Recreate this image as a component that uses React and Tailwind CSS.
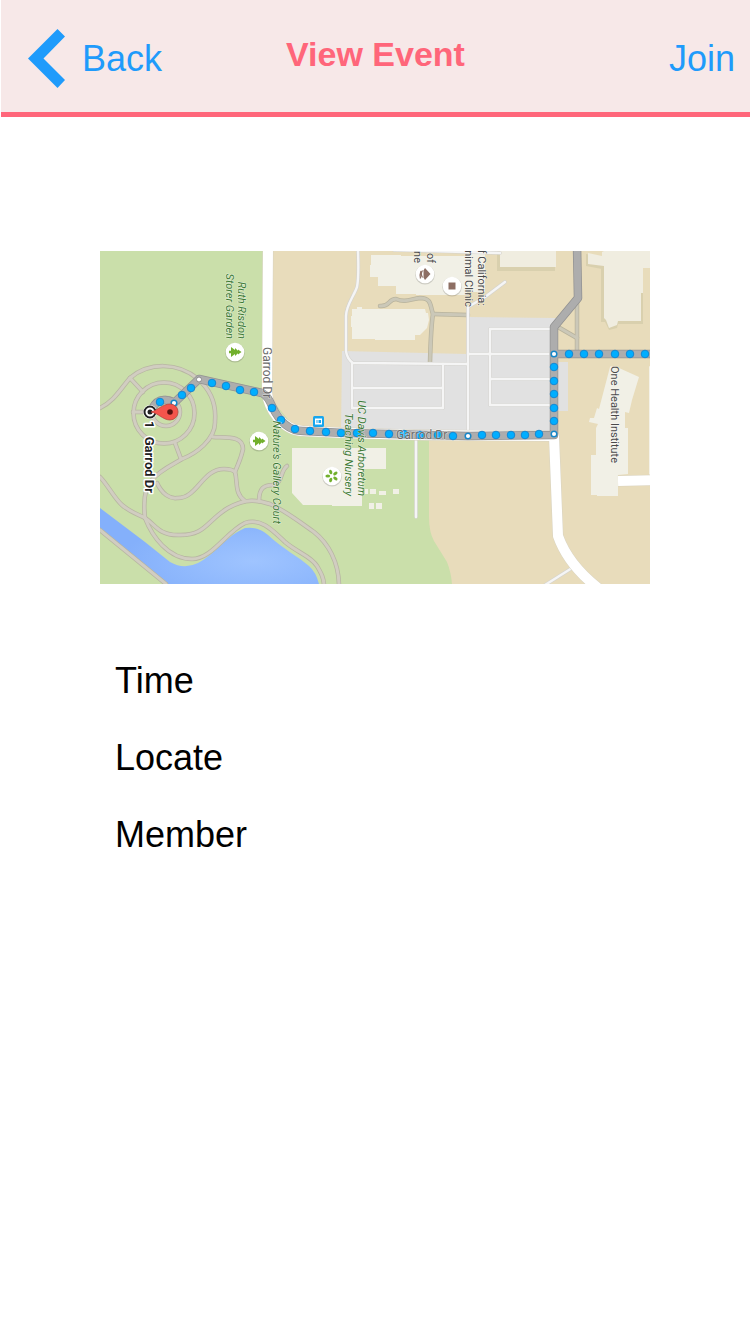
import React from "react";

const PATHS = [
  "M100 530L166 584",
  "M100 477C108 485 114 498 122 505S137 514 145 518C155 524 158 535 178 535C206 536 206 521 228 508C246 498 258 500 270 504C286 511 304 525 314 532C328 543 339 562 339 586",
  "M145 518C152 536 168 559 192 559C212 559 226 532 245 523C262 517 275 533 285 542C298 553 311 556 317 566C321 573 324 578 324 586",
  "M145 518C143 500 145 487 152 480C160 470 174 464 182 459C195 454 216 440 215 421C216 409 214 393 198 379C178 362 149 362 130 378C119 391 114 401 100 408",
  "M130 378L143 392",
  "M133 412H147",
  "M175 443L181 459",
  "M213 437C225 438 243 435 243 449C241 459 238 464 235 472C238 482 234 493 245 501",
  "M157 483C162 494 170 499 177 498C197 499 202 469 224 469Q232 469 235 472",
  "M259 501C259 488 264 485 273 485C283 483 280 471 287 466",
];

const SERVICE_ROADS = [
  "M380 306C390 307 388 299 396 299C405 303 411 299 420 298C432 298 430 306 433 314Q431 326 430 362",
  "M433 314L468 315",
  "M577 297V352",
  "M558 327L577 338",
];

const LANES = [
  "M358 251Q359 277 357 287C354 296 346 305 346 316V351Q347 359 353 363L467 364",
  "M352 363V408H443V364",
  "M352 388H443",
  "M505 282L485 297L468 307V436",
  "M468 354H554",
  "M554 329H490V405H554",
  "M490 379H554",
  "M416 438V517",
  "M572 568L545 585",
  "M394 250L500 253",
];

const MAIN_ROAD =
  "M268 246L267 392C268 408 283 431 303 431L345 433L416 435L554 436L558 536C563 550 575 570 598 588";

const DOTS = [
  [160, 402], [182, 395], [191, 388], [212, 383], [226, 386], [240, 390], [254, 392],
  [272, 408], [281, 420], [295, 429], [310, 431], [326, 432], [341, 433], [357, 433],
  [373, 433], [389, 434], [404, 434], [420, 435], [438, 435], [453, 436], [482, 435],
  [496, 435], [511, 435], [525, 435], [539, 434], [554, 421], [554, 408], [554, 394],
  [554, 381], [554, 367], [569, 354], [584, 354], [599, 354], [615, 354], [630, 354],
  [645, 354],
];

const NODES = [[174, 403], [468, 436], [554, 434], [554, 354]];

function Label({ x, y, children, anchor = "end", size = 11, fill = "#3d7a35", italic, bold, haloWidth = 1, turned = true }) {
  return (
    <text
      transform={turned ? `translate(${x} ${y}) rotate(90)` : `translate(${x} ${y})`}
      textAnchor={anchor}
      fontSize={size}
      fill={fill}
      fontStyle={italic ? "italic" : "normal"}
      fontWeight={bold ? 700 : 400}
      stroke="#fff"
      strokeWidth={haloWidth}
      strokeOpacity={bold ? 1 : 0.6}
      paintOrder="stroke"
      strokeLinejoin="round"
    >
      {children}
    </text>
  );
}

function Place({ x, y, children }) {
  return (
    <g transform={`translate(${x} ${y})`}>
      <circle cy="0.7" r="9.8" fill="#000" opacity="0.15" />
      <circle r="9.3" fill="#fff" />
      {children}
    </g>
  );
}

function Tree() {
  return <path d="M6.500 0L3 -2.500V-1.200L0 -4V-2L-4 -5V-1.200H-6V1.200H-4V5L0 2V4L3 1.200V2.500Z" fill="#72b02d" />;
}

function RouteMap() {
  return (
    <svg viewBox="100 251 550 333" className="block w-full font-[Roboto,sans-serif]" role="img" aria-label="Route to 1 Garrod Dr">
      <defs>
        <radialGradient id="lake" cx="0.7" cy="0.7" r="0.6">
          <stop offset="0" stopColor="#9fc4ff" />
          <stop offset="1" stopColor="#84b0fb" />
        </radialGradient>
      </defs>
      <rect x="100" y="251" width="550" height="333" fill="#e8dcbb" />
      <path d="M100 251H268V395L300 434L429 438V517Q429 532 434 541L447 562Q451 572 452 584H100Z" fill="#cadfaa" />
      <path d="M342 351L467 354V317L556 318V362H568V411H556V434H341Z" fill="#e1e1e1" />
      <path d="M100 508L145 542L170 562Q184 570 198 563C213 556 226 536 245 528Q258 526 268 535C283 549 299 557 309 566Q316 572 319 584H166L100 530Z" fill="url(#lake)" />

      <g fill="#d9d0ae">
        <path d="M497 251H555V271H497Z" />
        <path d="M586 254L602 257V269L586 266ZM601 262H643V324H618L617 328L609 330L605 322H601Z" />
      </g>
      <g fill="#f0ede0">
        <path d="M500 251H556V267H500Z" />
        <path d="M588 253L602 256V252L604 251H650V268H643V293H641V321H618L617 325L609 328L606 320L604 318V266L588 264Z" />
      </g>
      <g fill="#f1f0e6">
        <path d="M371 255H401V256H467V252H485V292H467V295H416V294H396V286H378V277H370V265H371Z" />
        <path d="M352 309H357V307H362V309H425L426 313H428L429 320L427 328L424 331L420 335H415V340H375V339H352V327H351V316H352Z" />
        <path d="M610 367L611 366L619 370V368L639 377L632 400L629 413L625 412V428H628V474L618 475V496H597V495H591V455H596V428L598 424L589 422L590 418H594L597 408L599 409Z" />
        <path d="M292 448H386V469H362V506H332V505H303L292 493Z" />
        <path d="M365 489H368V494H365ZM370 489H376V494H370ZM379 491H386V495H379ZM393 489H399V494H393ZM369 503H374V509H369ZM376 503H382V509H376Z" />
      </g>

      <g fill="none" strokeLinecap="round" strokeLinejoin="round">
        {[["#b7b5a2", 4.5], ["#d1cdc1", 3]].map(([stroke, width]) => (
          <g key={stroke} stroke={stroke} strokeWidth={width}>
            {PATHS.map((d) => <path key={d} d={d} />)}
            <circle cx="164" cy="413" r="30.500" />
            <circle cx="166" cy="412" r="14" />
          </g>
        ))}
        {[["#b8b39d", 4.5], ["#cbc8b8", 3]].map(([stroke, width]) => (
          <g key={stroke} stroke={stroke} strokeWidth={width}>
            {SERVICE_ROADS.map((d) => <path key={d} d={d} />)}
          </g>
        ))}
        {[["#d4d3cf", 3.6], ["#f5f5f5", 2.4]].map(([stroke, width]) => (
          <g key={stroke} stroke={stroke} strokeWidth={width}>
            {LANES.map((d) => <path key={d} d={d} />)}
          </g>
        ))}
        <path d="M650 367V474" stroke="#f4f2e9" strokeWidth="2" />
        <path d="M618 481L655 480" stroke="#d9d2bd" strokeWidth="11" strokeLinecap="butt" />
        <path d="M618 481L655 480" stroke="#fff" strokeWidth="10" strokeLinecap="butt" />
        <path d={MAIN_ROAD} stroke="#d8d3c2" strokeWidth="11" />
        <path d={MAIN_ROAD} stroke="#fff" strokeWidth="10" />
        {[["#929292", 8.5], ["#adadad", 7]].map(([stroke, width]) => (
          <g key={stroke} stroke={stroke} strokeWidth={width}>
            <path d="M577 246L578 298L554 327V354" />
            <path d="M152 409Q157 399 165 400T174 403L199 379L262 393Q268 396 272 406C278 419 288 431 303 431L345 433L390 434L468 436L554 435V354H655" />
          </g>
        ))}
      </g>

      <g fill="#00aeff" stroke="#1687d1" strokeWidth="1">
        {DOTS.map(([x, y]) => <circle key={`${x}-${y}`} cx={x} cy={y} r="3.8" />)}
      </g>
      <g fill="#fff" stroke="#1787c9" strokeWidth="1.500">
        {NODES.map(([x, y]) => <circle key={`${x}-${y}`} cx={x} cy={y} r="2.800" />)}
      </g>
      <circle cx="199" cy="379.500" r="2.500" fill="#fff" stroke="#8b8b8b" />

      <Label x={238} y={339} italic>Ruth Risdon</Label>
      <Label x={226} y={339} italic>Storer Garden</Label>
      <Label x={273} y={524} italic>Nature's Gallery Court</Label>
      <Label x={358} y={496} italic>UC Davis Arboretum</Label>
      <Label x={345} y={496} italic>Teaching Nursery</Label>
      <Label x={263} y={347} anchor="start" size={12} fill="#6b6b6b">Garrod Dr</Label>
      <Label x={396} y={439} anchor="start" size={12} fill="#6b6b6b" turned={false}>Garrod Dr</Label>
      <Label x={611} y={366} anchor="start" fill="#4a4a4a">One Health Institute</Label>
      <Label x={478} y={306} fill="#4a4a4a">f California:</Label>
      <Label x={465} y={307} fill="#4a4a4a">nimal Clinic</Label>
      <Label x={427} y={263} fill="#4a4a4a">of</Label>
      <Label x={414} y={263} fill="#4a4a4a">ne</Label>
      <Label x={145} y={421} anchor="start" bold size={13} fill="#222" haloWidth={3}>1</Label>
      <Label x={145} y={493} bold size={13} fill="#222" haloWidth={3}>Garrod Dr</Label>

      <Place x={235} y={352}><Tree /></Place>
      <Place x={259} y={441}><Tree /></Place>
      <Place x={425} y={274}>
        <path d="M0 -6L5.500 0L0 6L-1.500 3.500V-3.500Z" fill="#8d6e63" />
        <path d="M-2.500 -3.500Q-4.800 0 -2.500 3.500M-4.500 4.500Q-5.500 1 -4 -3" fill="none" stroke="#8d6e63" strokeWidth="1.300" />
      </Place>
      <Place x={452} y={286}><path d="M-3.500 -3.500H3.500V3.500H-3.500Z" fill="#8d6e63" /></Place>
      <Place x={332} y={476}>
        <g fill="#72b02d">
          {[0, 72, 144, 216, 288].map((angle) => (
            <ellipse key={angle} cx="4.200" cy="0" rx="2.400" ry="1.500" transform={`rotate(${angle + 36})`} />
          ))}
        </g>
      </Place>
      <g transform="translate(313 416)">
        <rect width="11" height="11" rx="1.500" fill="#18a6ee" />
        <path d="M2 2.500H9V8.500H2ZM3.500 4V7H4.500V4ZM5.500 4V7H8V4Z" fill="#fff" fillRule="evenodd" />
      </g>

      <circle cx="150" cy="412" r="7" fill="#fff" />
      <circle cx="150" cy="412" r="5.500" fill="#fff" stroke="#222" strokeWidth="2" />
      <circle cx="150" cy="412" r="2.500" fill="#222" />
      <path d="M151 412C158 410 163 404 170 404A8 8 0 1 1 170 420C163 420 158 413 151 412Z" fill="#f4544c" stroke="#b3413b" strokeWidth="0.700" />
      <circle cx="170" cy="412" r="2.800" fill="#5c1210" />
    </svg>
  );
}

export default function App() {
  return (
    <div className="min-h-screen bg-white font-['Liberation_Sans',Arial,sans-serif] text-4xl leading-10 text-black">
      <header className="ml-px grid grid-cols-[1fr_auto_1fr] items-start border-b-[5px] border-[#ff667a] bg-[#f7e8e8] pt-[29px] pb-6">
        <button type="button" className="flex items-center gap-[17px] justify-self-start pl-[27px] text-[#1f9bfb]">
          <svg viewBox="0 0 37 59" className="h-[59px] w-[37px]" aria-hidden="true">
            <path d="M29.500 0L37 7.500L15.500 29.500L37 51L29.500 59L0 29.500Z" fill="currentColor" />
          </svg>
          Back
        </button>
        <h1 className="pt-[5px] text-[34px] leading-10 font-bold text-[#ff667a]">View Event</h1>
        <button type="button" className="h-[59px] justify-self-end pr-[15px] text-[#1f9bfb]">Join</button>
      </header>
      <main className="px-[100px] pt-[134px]">
        <RouteMap />
        <ul className="flex flex-col gap-[37px] pt-[77px] pl-[15px]">
          <li>Time</li>
          <li>Locate</li>
          <li>Member</li>
        </ul>
      </main>
    </div>
  );
}
